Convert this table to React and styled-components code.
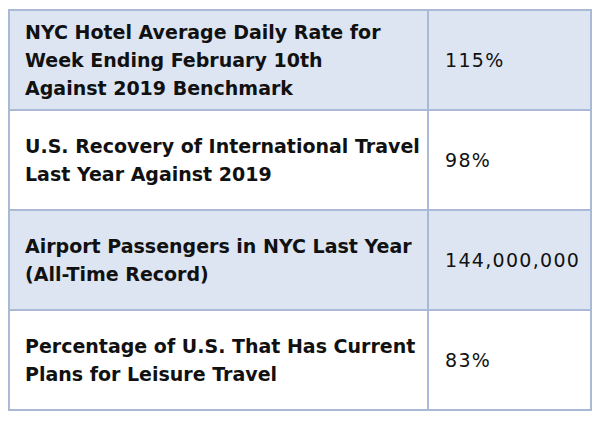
import React from 'react';
import styled, { createGlobalStyle } from 'styled-components';

const GlobalStyle = createGlobalStyle`
  body {
    margin: 8px;
    background: #ffffff;
    font-family: 'DejaVu Sans', 'Liberation Sans', sans-serif;
  }
`;

const Table = styled.table`
  width: 584px;
  border-collapse: collapse;
  table-layout: fixed;
  margin-top: 1px;
`;

const LabelCol = styled.col`
  width: 419px;
`;

const Row = styled.tr`
  background: ${(p) => (p.$shaded ? '#dce5f1' : '#ffffff')};
`;

const Cell = styled.td`
  border: 2px solid #a9b9d6;
  height: 98px;
  padding: 0 0 0 15px;
  vertical-align: middle;
  color: #111111;
  font-size: 19px;
  line-height: 28px;
  white-space: nowrap;
`;

const Label = styled(Cell)`
  font-weight: 700;
`;

const Value = styled(Cell)`
  font-weight: 400;
  padding-left: 16px;
  letter-spacing: 1.3px;
`;

const rows = [
  {
    label: ['NYC Hotel Average Daily Rate for', 'Week Ending February 10th', 'Against 2019 Benchmark'],
    value: '115%',
  },
  {
    label: ['U.S. Recovery of International Travel', 'Last Year Against 2019'],
    value: '98%',
  },
  {
    label: ['Airport Passengers in NYC Last Year', '(All-Time Record)'],
    value: '144,000,000',
  },
  {
    label: ['Percentage of U.S. That Has Current', 'Plans for Leisure Travel'],
    value: '83%',
  },
];

const App = () => (
  <>
    <GlobalStyle />
    <Table>
      <colgroup>
        <LabelCol />
        <col />
      </colgroup>
      <tbody>
        {rows.map((row, i) => (
          <Row key={row.value} $shaded={i % 2 === 0}>
            <Label>
              {row.label.map((line, j) => (
                <React.Fragment key={j}>
                  {j > 0 && <br />}
                  {line}
                </React.Fragment>
              ))}
            </Label>
            <Value>{row.value}</Value>
          </Row>
        ))}
      </tbody>
    </Table>
  </>
);

export default App;
